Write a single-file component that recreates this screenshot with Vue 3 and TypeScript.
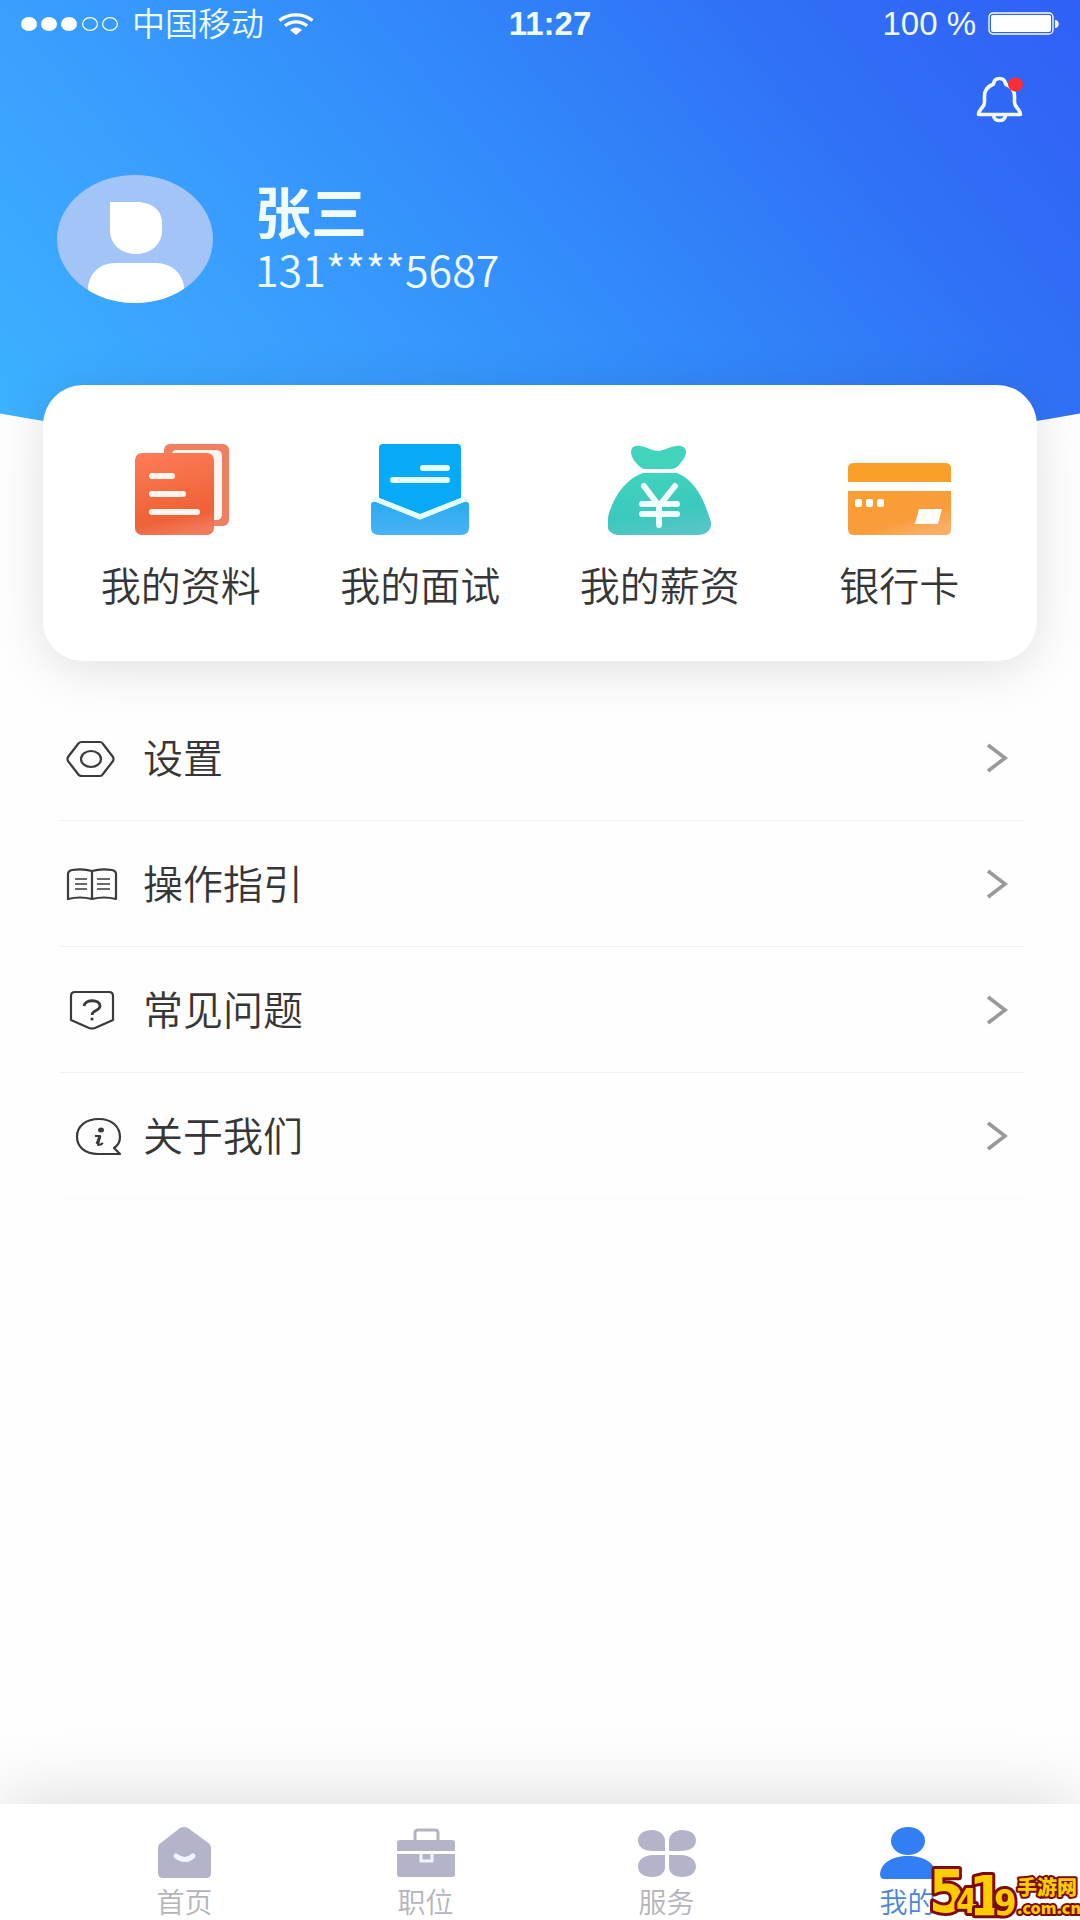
<script setup lang="ts">
interface Entry {
  id: string
  label: string
}

const shortcuts: Entry[] = [
  { id: 'profile', label: '我的资料' },
  { id: 'interview', label: '我的面试' },
  { id: 'salary', label: '我的薪资' },
  { id: 'card', label: '银行卡' },
]

const menu: Entry[] = [
  { id: 'settings', label: '设置' },
  { id: 'guide', label: '操作指引' },
  { id: 'faq', label: '常见问题' },
  { id: 'about', label: '关于我们' },
]

const tabs: Entry[] = [
  { id: 'home', label: '首页' },
  { id: 'jobs', label: '职位' },
  { id: 'service', label: '服务' },
  { id: 'mine', label: '我的' },
]
const activeTab = 'mine'
</script>

<template>
  <div class="page">
    <header class="hero">
      <div class="status">
        <div class="status-left">
          <svg width="98" height="16" viewBox="0 0 98 16" aria-hidden="true">
            <g fill="#fff">
              <ellipse cx="9" cy="8" rx="8" ry="7" />
              <ellipse cx="29" cy="8" rx="8" ry="7" />
              <ellipse cx="49" cy="8" rx="8" ry="7" />
            </g>
            <g fill="none" stroke="#fff" stroke-width="1.2">
              <ellipse cx="70" cy="8" rx="7.4" ry="6.4" />
              <ellipse cx="90" cy="8" rx="7.4" ry="6.4" />
            </g>
          </svg>
          <span class="carrier">中国移动</span>
          <svg width="36" height="22" viewBox="0 0 36 22" aria-hidden="true">
            <g fill="none" stroke="#fff" stroke-width="3.4">
              <path d="M1.5 7.5C11 0 25 0 34.5 7.5" />
              <path d="M7 12.8C13.5 7.500 22.5 7.500 29 12.8" />
            </g>
            <path d="M12 17c3.500-3.500 8.500-3.500 12 0L18 22z" fill="#fff" />
          </svg>
        </div>
        <span class="time">11:27</span>
        <div class="status-right">
          <span>100 %</span>
          <svg width="72" height="24" viewBox="0 0 72 24" aria-hidden="true">
            <rect x="1" y="1" width="64" height="21" rx="4" fill="none" stroke="#fff" stroke-width="1.3" />
            <rect x="3" y="3" width="60" height="17" rx="2" fill="#fff" />
            <path d="M67 8c5 0 5 8 0 8z" fill="#fff" />
          </svg>
        </div>
      </div>

      <div class="toolbar">
        <button class="bell" type="button" aria-label="消息">
          <svg width="48" height="48" viewBox="0 0 48 48" aria-hidden="true">
            <g fill="none" stroke="#f2f9ff" stroke-width="3.6" stroke-linejoin="round">
              <path d="M17.5 8C18 4 20 2.500 23.500 2.500S29 4 29.500 8C35.500 10.500 38.500 14 38.500 20v6c0 3.500 1.500 4.500 3.500 7 1.500 2 2.500 3 2.500 5.500h-42c0-2.500 1-3.500 2.500-5.500C7 30.500 8.500 29.500 8.500 26v-6c0-6 3-9.500 9-12z" />
              <path d="M17.500 39c0 4 3 5.500 6 5.500s6-1.500 6-5.500" />
            </g>
            <ellipse cx="39.500" cy="8.500" rx="7.500" ry="7" fill="#fb2d35" />
          </svg>
        </button>
      </div>

      <div class="user">
        <svg class="avatar" width="156" height="128" viewBox="0 0 156 128" aria-hidden="true">
          <defs>
            <clipPath id="avatar-clip"><ellipse cx="78" cy="64" rx="78" ry="64" /></clipPath>
          </defs>
          <g clip-path="url(#avatar-clip)">
            <rect width="156" height="128" fill="#a2c4f6" />
            <path d="M53 27h26c17 0 26 9 26 21v8c0 13-11 23-26 23S53 69 53 56z" fill="#fff" />
            <path d="M31 128v-14c0-14 11-26 27-26h41c16 0 28 12 28 26v14z" fill="#fff" />
          </g>
        </svg>
        <div class="identity">
          <h1>张三</h1>
          <p>131****5687</p>
        </div>
      </div>
    </header>

    <section class="card">
      <a v-for="item in shortcuts" :key="item.id" class="shortcut" href="#">
        <svg v-if="item.id === 'profile'" width="104" height="92" viewBox="0 0 104 92" aria-hidden="true">
          <defs>
            <linearGradient id="g-red" x1="0.3" y1="0" x2="0.5" y2="1">
              <stop offset="0" stop-color="#fb7a55" />
              <stop offset="0.8" stop-color="#ef6136" />
              <stop offset="1" stop-color="#f07a5a" />
            </linearGradient>
          </defs>
          <rect x="35" y="0" width="65" height="82" rx="6" fill="#ee7f60" />
          <path d="M43 10q0-4 5-4h39q6 0 6 6v58q0 6-6 6h-8V10z" fill="#fff5ef" />
          <rect x="6" y="9" width="79" height="82" rx="7" fill="url(#g-red)" />
          <path d="M23 32h20M23 50h31M23 68h45" stroke="#fff4ee" stroke-width="6" stroke-linecap="round" />
        </svg>
        <svg v-else-if="item.id === 'interview'" width="104" height="92" viewBox="0 0 104 92" aria-hidden="true">
          <defs>
            <linearGradient id="g-blue" x1="0" y1="0" x2="0" y2="1">
              <stop offset="0" stop-color="#2baaf0" />
              <stop offset="1" stop-color="#47b3f5" />
            </linearGradient>
          </defs>
          <path d="M11 4q0-4 4-4h74q4 0 4 4v50L52 70 11 54z" fill="#08aaf7" />
          <path d="M3 61q0-4 5-3l44 17 44-17q5-1 5 3v23q0 7-8 7H11q-8 0-8-7z" fill="url(#g-blue)" />
          <path d="M5 54 52 73 99 54" fill="none" stroke="#e4ffff" stroke-width="5" />
          <path d="M55 24h24M25 36h54" stroke="#e4ffff" stroke-width="6" stroke-linecap="round" />
        </svg>
        <svg v-else-if="item.id === 'salary'" width="104" height="92" viewBox="0 0 104 92" aria-hidden="true">
          <defs>
            <linearGradient id="g-green" x1="0.4" y1="0" x2="0.7" y2="1">
              <stop offset="0" stop-color="#3fd3bd" />
              <stop offset="0.6" stop-color="#3bc9bd" />
              <stop offset="1" stop-color="#58c5c8" />
            </linearGradient>
          </defs>
          <path d="M23 8c0-5 4-7 9-6 8 1 12 5 18 5s10-4 18-5c6-1 10 2 10 6 0 5-5 11-9 15-2 1-3 2-6 2H38c-3 0-5-1-7-3-4-4-8-9-8-14z" fill="#42d3bd" />
          <path d="M35 29h34c20 8 28 30 34 49 1 8-5 13-13 13H12C4 91-2 86-1 78 3 55 17 35 35 29z" fill="url(#g-green)" />
          <path d="M36 42 51 62 67 42M51 61v20M34 60h35M34 70h35" fill="none" stroke="#f2ffff" stroke-width="6" stroke-linecap="round" stroke-linejoin="round" />
        </svg>
        <svg v-else width="104" height="92" viewBox="0 0 104 92" aria-hidden="true">
          <defs>
            <linearGradient id="g-orange" x1="0" y1="0" x2="0.7" y2="1">
              <stop offset="0" stop-color="#fb9d30" />
              <stop offset="0.7" stop-color="#f99d3d" />
              <stop offset="1" stop-color="#fbae64" />
            </linearGradient>
          </defs>
          <path d="M1 24q0-5 6-5h91q6 0 6 5v14H1z" fill="#fa9f29" />
          <path d="M1 47h103v38q0 6-6 6H7q-6 0-6-6z" fill="url(#g-orange)" />
          <g fill="#fffdf6">
            <rect x="8" y="55" width="7" height="8" rx="2" />
            <rect x="19" y="55" width="7" height="8" rx="2" />
            <rect x="30" y="55" width="7" height="8" rx="2" />
            <path d="M72 65h23l-4 15H68z" />
          </g>
        </svg>
        <span>{{ item.label }}</span>
      </a>
    </section>

    <ul class="menu">
      <li v-for="item in menu" :key="item.id">
        <a class="row" href="#">
          <svg class="row-icon" width="60" height="40" viewBox="0 0 60 40" fill="none" stroke="#3a3a3a" stroke-width="2.2" stroke-linejoin="round" aria-hidden="true">
            <template v-if="item.id === 'settings'">
              <path d="M18 4h18q2 0 3 2l10 13q1 2 0 4L39 36q-1 2-3 2H18q-3 0-4-2L4 23q-1-2 0-4L14 6q1-2 4-2z" />
              <ellipse cx="27" cy="21" rx="10" ry="8" />
            </template>
            <template v-else-if="item.id === 'guide'">
              <path d="M4 35V10q0-3 4-4c7-1 13-1 20 1 7-2 13-2 20-1q4 1 4 4v25c-8-2-16-2-24 0-8-2-16-2-24 0zM28 7v28" />
              <path d="M11 15h12M11 20h12M11 25h12M33 15h13M33 20h13M33 25h13" stroke-width="1.5" />
            </template>
            <template v-else-if="item.id === 'faq'">
              <path d="M11 2h34q4 0 4 4v24L31 38q-3 1-6 0L7 30V6q0-4 4-4z" />
              <path d="M20 16c1-7 16-7 16 0 0 5-8 4-8 9" stroke-width="2.8" />
              <circle cx="28" cy="29" r="1.6" fill="#3a3a3a" stroke="none" />
            </template>
            <template v-else>
              <path d="M34 38C21 38 13 31 13 20.5 13 10 22 3 35 3s21 8 21 18c0 5-3 9-6 11l6 6z" />
              <ellipse cx="37" cy="14" rx="3" ry="2.500" fill="#3a3a3a" stroke="none" />
              <path d="M31 20h5l-2 9q3 0 5-2" stroke-width="2" />
              <path d="M36 20l-3 8" stroke-width="3" />
            </template>
          </svg>
          <span class="row-label">{{ item.label }}</span>
          <svg class="chevron" width="24" height="32" viewBox="0 0 24 32" aria-hidden="true">
            <path d="M3 3 20 16 3 29" fill="none" stroke="#999" stroke-width="3.6" />
          </svg>
        </a>
      </li>
    </ul>

    <nav class="tabbar">
      <a v-for="tab in tabs" :key="tab.id" class="tab" :class="{ active: tab.id === activeTab }" href="#">
        <svg width="60" height="54" viewBox="0 0 60 54" fill="#b3b4c9" aria-hidden="true">
          <template v-if="tab.id === 'home'">
            <path d="M25 3q4-2 8 0l19 14q4 2 4 6v25q0 5-5 5H8q-5 0-5-5V23q0-4 4-6z" />
            <path d="M21 31q9 7 17 0" fill="none" stroke="#eef5ff" stroke-width="5" stroke-linecap="round" />
          </template>
          <template v-else-if="tab.id === 'jobs'">
            <path d="M19 16V8q0-3 3-3h17q3 0 3 3v8" fill="none" stroke="#b3b4c0" stroke-width="3" />
            <path d="M1 17q0-2 3-2h52q3 0 3 2v9H1zM1 29h58v20q0 3-3 3H4q-3 0-3-3z" />
            <path d="M25 28v8h11v-8" fill="none" stroke="#eef5ff" stroke-width="3" />
          </template>
          <template v-else-if="tab.id === 'service'">
            <path d="M28 26H16C7 26 1 22 1 15.500S7 5 15 5s13 5 13 11zM32 26V16C32 10 37 5 45 5s14 4 14 10.500S53 26 44 26zM28 30v12c0 6-5 10-13 10S1 48 1 41.500 7 30 16 30zM32 30h12c9 0 15 5 15 11.500S53 52 45 52s-13-4-13-10z" />
          </template>
          <template v-else>
            <ellipse cx="30" cy="16" rx="17" ry="14" fill="#317ef5" />
            <path d="M2 49C3 38 14 31 30 31s27 7 28 18q0 5-4 5H6q-4 0-4-5z" fill="#317ef5" />
          </template>
        </svg>
        <span>{{ tab.label }}</span>
      </a>
    </nav>

    <svg class="sitemark" width="154" height="56" viewBox="0 0 154 56" role="img" aria-label="5419手游网 .com.cn">
      <g class="mark-num">
        <text x="3" y="48" font-size="58">5</text>
        <text x="30" y="49" font-size="34">4</text>
        <text x="43" y="51" font-size="56">1</text>
        <text x="68" y="51" font-size="36">9</text>
      </g>
      <g class="mark-text">
        <text x="91" y="31" font-size="20">手游网</text>
        <text x="91" y="50" font-size="16">.com.cn</text>
      </g>
    </svg>
  </div>
</template>

<style>
body {
  background: #fefefe;
}
</style>

<style scoped>
.page {
  position: relative;
  display: flex;
  flex-direction: column;
  min-height: 100vh;
  overflow: hidden;
  background: #fefefe;
  color: #363636;
  font-family: 'Noto Sans CJK SC', 'Noto Sans', sans-serif;
  font-weight: 350;
}

a {
  color: inherit;
  text-decoration: none;
}

svg {
  display: block;
  flex: none;
}

.hero {
  padding-bottom: 157px;
  color: #f0fbff;
  background: linear-gradient(50deg, #3cb4ff 0%, #3a9fff 26%, #3594fc 40%, #317ff8 63%, #3071f7 76%, #3060f5 100%);
  clip-path: ellipse(114% 100% at 50% 0);
}

.status {
  display: grid;
  grid-template-columns: 1fr auto 1fr;
  align-items: center;
  height: 48px;
  padding-left: 20px;
  font: 33px/46px 'Liberation Sans', Arial, sans-serif;
}

.status-left,
.status-right {
  display: flex;
  align-items: center;
}

.carrier {
  margin: 0 14px 4px;
  font-family: 'Noto Sans CJK SC', sans-serif;
  font-weight: 350;
  line-height: 42px;
}

.time {
  font-weight: 700;
}

.status-right {
  justify-content: flex-end;
  gap: 12px;
  padding-right: 20px;
}

.toolbar {
  display: flex;
  justify-content: flex-end;
  padding: 28px 56px 0 0;
}

.bell {
  padding: 0;
  border: 0;
  background: none;
  cursor: pointer;
}

.user {
  display: flex;
  align-items: center;
  gap: 42px;
  padding: 51px 57px 0;
}

.identity h1,
.identity p {
  margin: 0;
  line-height: 58px;
}

.identity h1 {
  font-size: 56px;
  font-weight: 700;
}

.identity p {
  font-size: 43px;
}

.card {
  position: relative;
  display: grid;
  grid-template-columns: repeat(4, 1fr);
  margin: -75px 43px 0;
  padding: 59px 18px 53px;
  border-radius: 40px;
  background: #fff;
  box-shadow: 0 8px 52px rgba(0, 0, 0, 0.12);
}

.shortcut {
  display: flex;
  flex-direction: column;
  align-items: center;
  gap: 24px;
  font-size: 40px;
  line-height: 48px;
}

.menu {
  margin: 34px 56px 0 60px;
  padding: 0;
  list-style: none;
}

.row {
  display: flex;
  align-items: center;
  gap: 19px;
  height: 125px;
  padding: 0 15px 0 4px;
  border-bottom: 1px solid #f1f1f3;
  font-size: 40px;
  line-height: 48px;
}

.row-label {
  margin-bottom: 4px;
}

.menu li:last-child .row {
  border-color: #fafafa;
}

.chevron {
  margin-left: auto;
}

.tabbar {
  display: grid;
  grid-template-columns: repeat(4, 1fr);
  margin-top: auto;
  padding: 21px 52px 0 64px;
  background: #fff;
  box-shadow: 0 -8px 70px rgba(0, 0, 0, 0.13);
}

.tab {
  display: flex;
  flex-direction: column;
  align-items: center;
  gap: 3px;
  color: #b4b4ba;
  font-size: 28px;
  line-height: 38px;
}

.tab.active {
  color: #4a86dc;
}

.sitemark {
  position: absolute;
  right: 0;
  bottom: 0;
}

.sitemark text {
  fill: #fc0;
  stroke: #7c0a08;
  stroke-width: 6px;
  stroke-linejoin: round;
  paint-order: stroke;
  font-weight: 900;
}

.mark-num text {
  font-family: 'Liberation Sans Narrow', 'DejaVu Sans Condensed', 'Liberation Sans', sans-serif;
}

.mark-text text {
  font-family: 'Noto Sans CJK SC', sans-serif;
  stroke-width: 4px;
}
</style>
